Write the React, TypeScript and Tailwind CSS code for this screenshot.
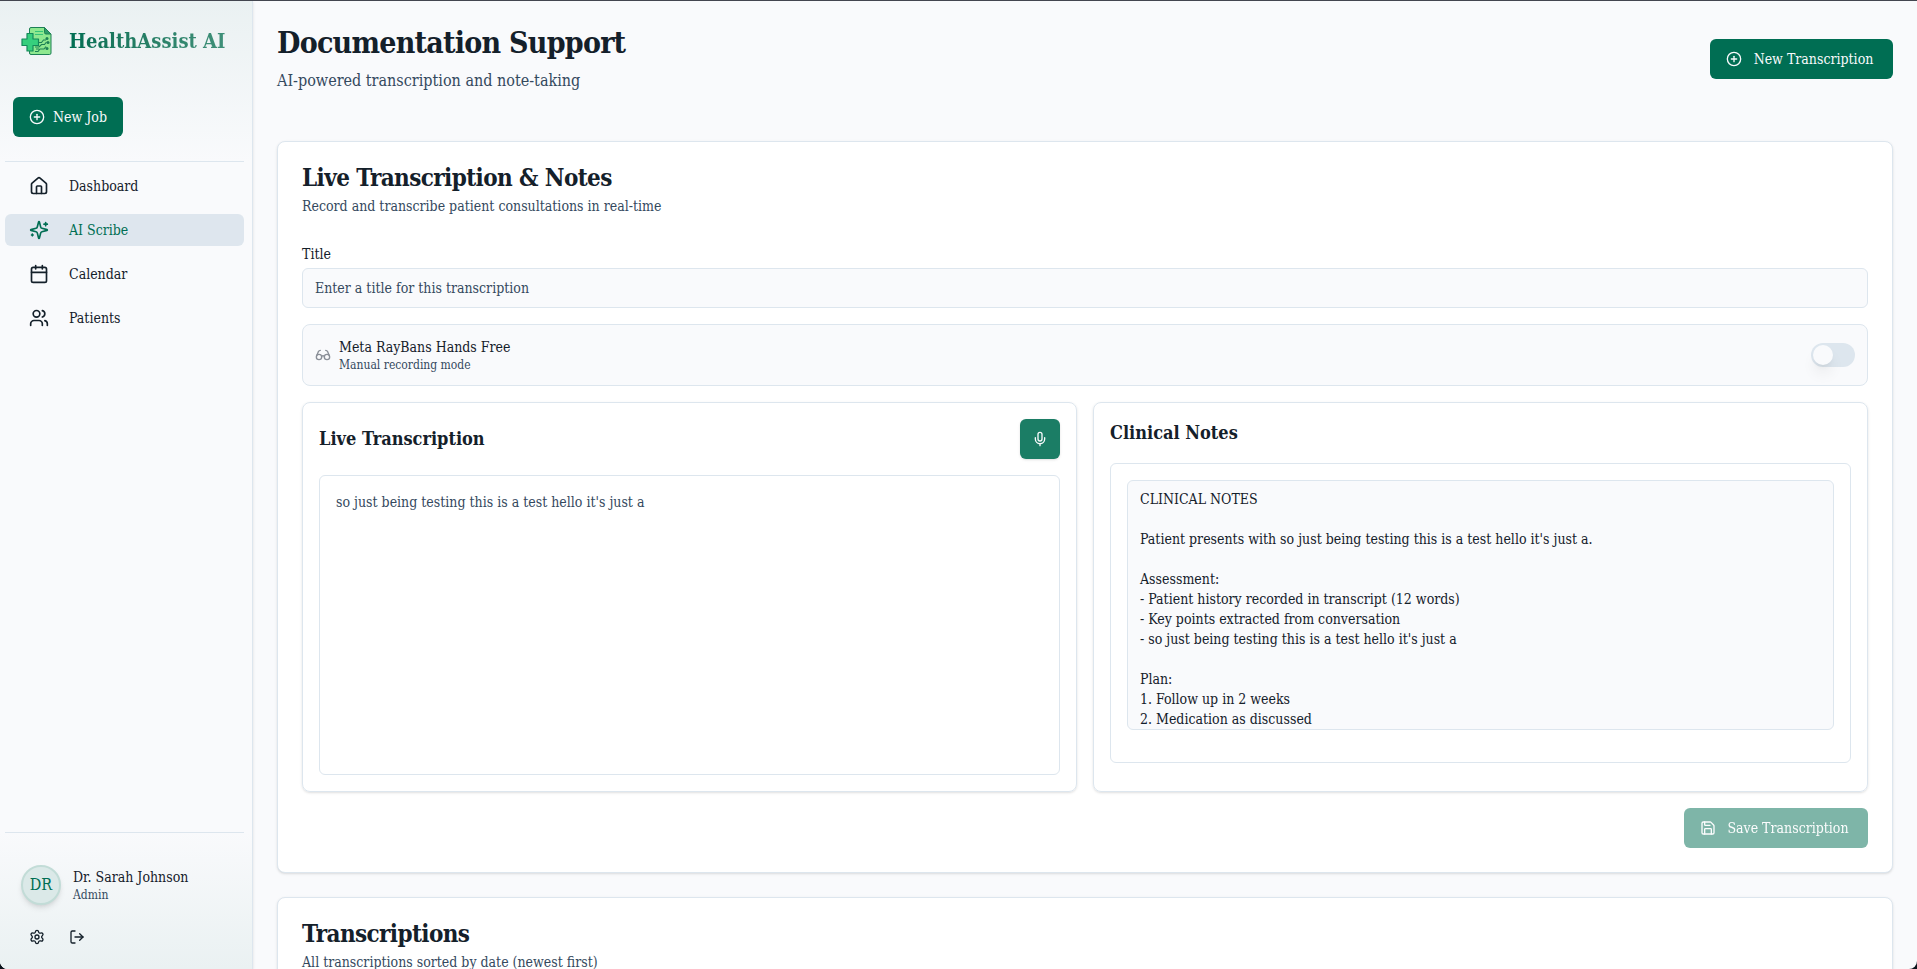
import type { ReactNode } from "react";
import {
  Calendar,
  CirclePlus,
  Glasses,
  House,
  LogOut,
  Mic,
  Save,
  Settings,
  Users,
} from "lucide-react";

const NOTES = `CLINICAL NOTES

Patient presents with so just being testing this is a test hello it's just a.

Assessment:
- Patient history recorded in transcript (12 words)
- Key points extracted from conversation
- so just being testing this is a test hello it's just a

Plan:
1. Follow up in 2 weeks
2. Medication as discussed`;

function Sparkles({ className }: { className?: string }) {
  return (
    <svg
      viewBox="0 0 24 24"
      className={className}
      fill="none"
      stroke="currentColor"
      strokeWidth="2"
      strokeLinecap="round"
      strokeLinejoin="round"
      aria-hidden="true"
    >
      <path d="M9.937 15.500A2 2 0 0 0 8.500 14.063l-6.135-1.582a.5.5 0 0 1 0-.962L8.500 9.936A2 2 0 0 0 9.937 8.500l1.582-6.135a.5.5 0 0 1 .963 0L14.063 8.500A2 2 0 0 0 15.500 9.937l6.135 1.581a.5.5 0 0 1 0 .964L15.500 14.063a2 2 0 0 0-1.437 1.437l-1.582 6.135a.5.5 0 0 1-.963 0z" />
      <path d="M20 3v4M22 5h-4M4 17v2M5 18H3" />
    </svg>
  );
}

const NAV = [
  { label: "Dashboard", Icon: House, active: false },
  { label: "AI Scribe", Icon: Sparkles, active: true },
  { label: "Calendar", Icon: Calendar, active: false },
  { label: "Patients", Icon: Users, active: false },
];

function Logo() {
  return (
    <svg viewBox="0 0 32 32" className="size-8 shrink-0" fill="none" aria-hidden="true">
      <path
        d="M10 2.500h13.500l6.500 6.500v19a1.500 1.500 0 0 1-1.500 1.500H10A1.500 1.500 0 0 1 8.500 28V4A1.500 1.500 0 0 1 10 2.500z"
        fill="#8ee88f"
        stroke="#1c8055"
      />
      <path d="M23.500 2.500V7.500a1.500 1.500 0 0 0 1.500 1.500h5z" fill="#2f9d68" stroke="#1c8055" />
      <path d="M14 6.500h8M14 9.500h8" stroke="#35c478" strokeWidth="1.200" />
      <path
        d="M17 17.500h3.500l2-2.500h2.500M14 22h4l2.500-2.500h3l2-2.500M14 26.500h3l2-2.500h4l2-2.500M15 24h3"
        stroke="#1c8055"
        strokeWidth="1.100"
      />
      <g fill="#1c8055">
        <circle cx="26" cy="13.500" r="1.500" />
        <circle cx="27" cy="17.500" r="1.500" />
        <circle cx="26" cy="23.500" r="1.500" />
      </g>
      <path
        d="M6 8.500h6v5.500h5.500v6.500H12V26H6v-5.500H1V14h5z"
        fill="#36cf7d"
        stroke="#158a5b"
        strokeWidth="1.200"
        strokeLinejoin="round"
      />
    </svg>
  );
}

function PrimaryButton({ icon, children, disabled }: { icon: ReactNode; children: ReactNode; disabled?: boolean }) {
  return (
    <button
      type="button"
      disabled={disabled}
      className="flex h-10 items-center gap-2 rounded-md bg-[#006e53] px-4 text-sm whitespace-nowrap text-[#f8fafc] disabled:opacity-50"
    >
      {icon}
      <span className="grow text-center">{children}</span>
    </button>
  );
}

function CardHeader({ title, description }: { title: string; description: string }) {
  return (
    <div className="flex flex-col gap-1.5 p-6">
      <h2 className="text-2xl leading-none font-bold tracking-tight">{title}</h2>
      <p className="text-sm text-[#34495e]">{description}</p>
    </div>
  );
}

function Sidebar() {
  return (
    <aside className="z-10 flex w-[253px] shrink-0 flex-col border-r border-[#dde6ee] bg-[#f9fafc] shadow-sm">
      <div className="bg-gradient-to-b from-[#eaf1f2] to-[#f9fafc]">
        <div className="flex h-20 items-center gap-4 pl-[21px]">
          <Logo />
          <span className="bg-gradient-to-r from-[#006e53] to-[#3f9079] bg-clip-text text-xl font-bold whitespace-nowrap text-transparent">
            HealthAssist AI
          </span>
        </div>
        <div className="flex pt-4 pb-6 pl-[13px]">
          <PrimaryButton icon={<CirclePlus className="size-4" />}>New Job</PrimaryButton>
        </div>
      </div>
      <nav className="mr-2 ml-[5px] flex grow flex-col gap-3 border-t border-[#dde6ee] pt-2">
        {NAV.map(({ label, Icon, active }) => (
          <a
            key={label}
            href={"#" + label}
            className={
              active
                ? "flex h-8 items-center gap-5 rounded-md bg-[#dee6ee] pl-6 text-sm text-[#006e53]"
                : "flex h-8 items-center gap-5 rounded-md pl-6 text-sm"
            }
          >
            <Icon className="size-5" />
            {label}
          </a>
        ))}
      </nav>
      <div className="bg-gradient-to-b from-[#f9fafc] to-[#eaf1f2] pb-3">
        <div className="mr-2 ml-[5px] border-t border-[#dde6ee]" />
        <div className="mt-8 flex items-center gap-3 pl-[21px]">
          <div className="flex size-10 items-center justify-center rounded-full border-2 border-[#c2dcd7] bg-[#dbe9e8] text-base text-[#006e53] shadow-md">
            DR
          </div>
          <div>
            <div className="text-sm">Dr. Sarah Johnson</div>
            <div className="text-xs text-[#34495e]">Admin</div>
          </div>
        </div>
        <div className="mt-3 flex pl-[17px]">
          <button type="button" aria-label="Settings" className="flex size-10 items-center justify-center">
            <Settings className="size-4" />
          </button>
          <button type="button" aria-label="Log out" className="flex size-10 items-center justify-center">
            <LogOut className="size-4" />
          </button>
        </div>
      </div>
    </aside>
  );
}

export default function App() {
  return (
    <div className="h-screen bg-[#0b141c] font-['DejaVu_Serif_Condensed','DejaVu_Serif',serif] text-[#14202a]">
      <div className="flex h-full overflow-hidden rounded-b-lg border-t border-[#434650] bg-[#f9fafc]">
        <Sidebar />
        <main className="flex min-w-0 grow flex-col gap-6 overflow-hidden p-6">
          <header className="mb-6 flex shrink-0 items-center justify-between">
            <div>
              <h1 className="text-3xl font-bold tracking-tight">Documentation Support</h1>
              <p className="mt-2 text-base text-[#34495e]">AI-powered transcription and note-taking</p>
            </div>
            <div className="grid min-w-[183px]">
              <PrimaryButton icon={<CirclePlus className="size-4" />}>New Transcription</PrimaryButton>
            </div>
          </header>

          <section className="shrink-0 rounded-lg border border-[#dde6ee] bg-white shadow-sm">
            <CardHeader title="Live Transcription & Notes" description="Record and transcribe patient consultations in real-time" />
            <div className="flex flex-col gap-4 px-6 pb-6">
              <div className="flex flex-col">
                <label htmlFor="title" className="pt-1 pb-1 text-sm">
                  Title
                </label>
                <input
                  id="title"
                  placeholder="Enter a title for this transcription"
                  className="h-10 w-full rounded-md border border-[#dde6ee] bg-[#f9fafc] px-3 text-sm placeholder:text-[#34495e]"
                />
              </div>

              <div className="flex items-center justify-between rounded-lg border border-[#dde6ee] bg-[#f9fafc] p-3">
                <div className="flex items-center gap-2">
                  <Glasses className="size-4 text-[#8a8f98]" />
                  <div>
                    <label htmlFor="hands-free" className="block text-sm">
                      Meta RayBans Hands Free
                    </label>
                    <p className="text-xs text-[#34495e]">Manual recording mode</p>
                  </div>
                </div>
                <label className="flex h-6 w-11 items-center rounded-full bg-[#dde6ee] p-0.5">
                  <input
                    id="hands-free"
                    type="checkbox"
                    role="switch"
                    className="size-5 appearance-none rounded-full bg-[#f9fafc] shadow-lg checked:translate-x-5"
                  />
                </label>
              </div>

              <div className="grid grid-cols-2 gap-4">
                <section className="rounded-lg border border-[#dde6ee] p-4 shadow-sm">
                  <div className="mb-4 flex items-center justify-between">
                    <h3 className="text-lg font-bold">Live Transcription</h3>
                    <button
                      type="button"
                      aria-label="Record"
                      className="flex size-10 items-center justify-center rounded-md bg-[#1b7d65] text-[#f8fafc] shadow-sm"
                    >
                      <Mic className="size-4" />
                    </button>
                  </div>
                  <div className="h-[300px] rounded-md border border-[#dde6ee] p-4 text-sm text-[#34495e]">
                    so just being testing this is a test hello it's just a
                  </div>
                </section>
                <section className="rounded-lg border border-[#dde6ee] p-4 shadow-sm">
                  <h3 className="mb-4 text-lg font-bold">Clinical Notes</h3>
                  <div className="h-[300px] rounded-md border border-[#dde6ee] p-4">
                    <textarea
                      aria-label="Clinical Notes"
                      defaultValue={NOTES}
                      className="block h-[250px] w-full resize-none overflow-hidden rounded-md border border-[#dde6ee] bg-[#f9fafc] px-3 py-2 text-sm"
                    />
                  </div>
                </section>
              </div>

              <div className="flex justify-end">
                <div className="grid min-w-[184px]">
                  <PrimaryButton disabled icon={<Save className="size-4" />}>
                    Save Transcription
                  </PrimaryButton>
                </div>
              </div>
            </div>
          </section>

          <section className="shrink-0 rounded-lg border border-[#dde6ee] bg-white shadow-sm">
            <CardHeader title="Transcriptions" description="All transcriptions sorted by date (newest first)" />
          </section>
        </main>
      </div>
    </div>
  );
}
